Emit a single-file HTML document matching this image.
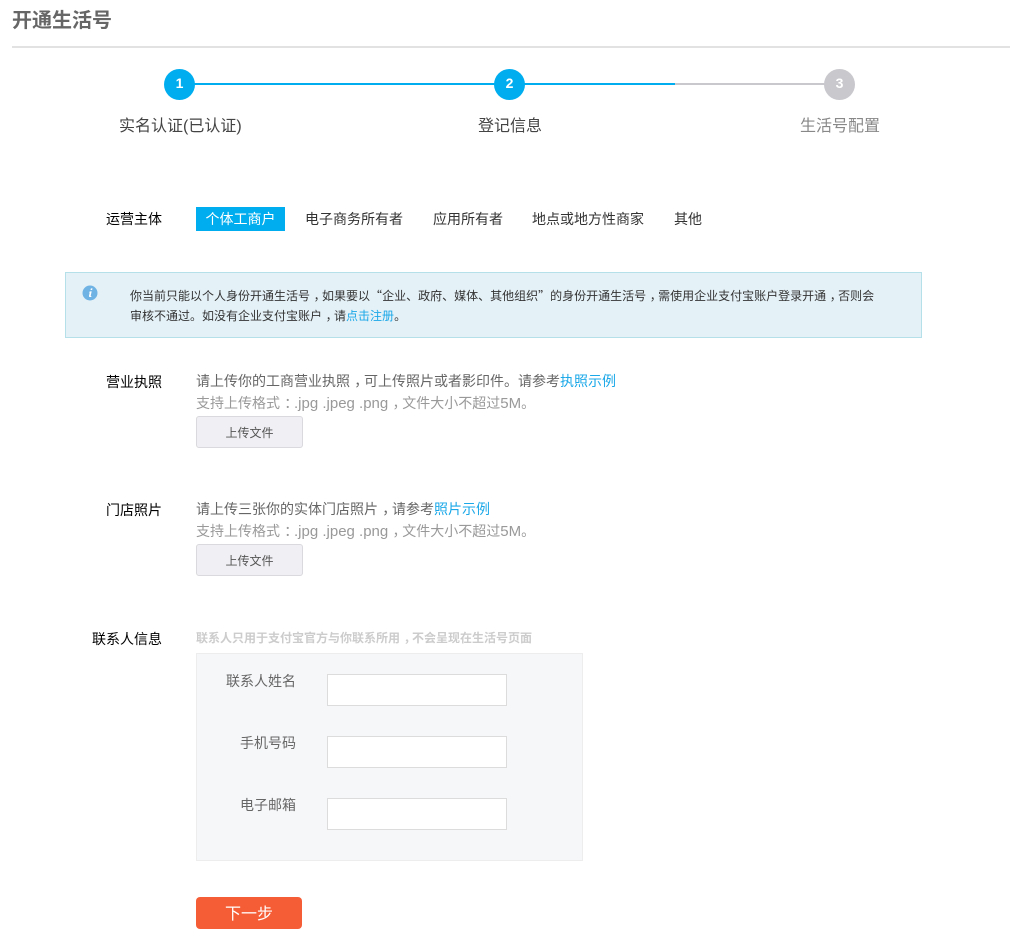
<!DOCTYPE html>
<html lang="zh-CN">
<head>
<meta charset="utf-8">
<title>开通生活号</title>
<style>
html,body{margin:0;padding:0;background:#fff;}
body{position:relative;width:1024px;height:941px;overflow:hidden;font-family:"Liberation Sans","Noto Sans CJK SC","WenQuanYi Zen Hei",sans-serif;font-size:14px;color:#333;}
.a{position:absolute;white-space:nowrap;}
.c{position:absolute;width:31px;height:31px;border-radius:50%;background:#00aeef;color:#fff;font-weight:bold;font-size:14px;line-height:29px;text-align:center;}
.l{position:absolute;height:2px;}
.lab{position:absolute;white-space:nowrap;color:#000;line-height:20px;text-align:right;left:60px;width:102px;}
.blue{color:#1ba8e8;}
.p{position:relative;left:.3em;}
.q{font-family:"Noto Sans CJK SC",sans-serif;}
.x{font-size:15px;}
.btn{position:absolute;left:196px;width:105px;height:30px;border:1px solid #d9d9de;border-radius:3px;background:#f0f0f4;color:#555;font-size:12px;line-height:32px;text-align:center;}
.inp{position:absolute;left:327px;width:178px;height:30px;border:1px solid #dcdcdc;background:#fff;}
.fl{position:absolute;left:200px;width:96px;text-align:right;color:#666;line-height:20px;white-space:nowrap;}
</style>
</head>
<body>
<div class="a" style="left:12px;top:8px;font-size:20px;font-weight:bold;color:#666;line-height:26px;">开通生活号</div>
<div class="a" style="left:12px;top:46px;width:998px;height:2px;background:#e2e2e2;"></div>

<div class="l" style="left:180px;top:83px;width:495px;background:#00aeef;"></div>
<div class="l" style="left:675px;top:83px;width:165px;background:#c8c8cd;"></div>
<div class="c" style="left:164px;top:69px;">1</div>
<div class="c" style="left:494px;top:69px;">2</div>
<div class="c" style="left:824px;top:69px;background:#c8c8cd;">3</div>
<div class="a" style="left:119px;top:116px;font-size:16px;line-height:22px;color:#444;">实名认证(已认证)</div>
<div class="a" style="left:478px;top:116px;font-size:16px;line-height:22px;color:#444;">登记信息</div>
<div class="a" style="left:800px;top:116px;font-size:16px;line-height:22px;color:#888;">生活号配置</div>

<div class="lab" style="top:209px;">运营主体</div>
<div class="a" style="left:196px;top:207px;width:89px;height:24px;background:#00aeef;color:#fff;line-height:24px;text-align:center;">个体工商户</div>
<div class="a" style="left:305px;top:209px;line-height:20px;">电子商务所有者</div>
<div class="a" style="left:433px;top:209px;line-height:20px;">应用所有者</div>
<div class="a" style="left:532px;top:209px;line-height:20px;">地点或地方性商家</div>
<div class="a" style="left:674px;top:209px;line-height:20px;">其他</div>

<div class="a" style="left:65px;top:272px;width:855px;height:64px;background:#e4f1f7;border:1px solid #b5e0ea;"></div>
<svg class="a" style="left:82px;top:285px;" width="16" height="16" viewBox="0 0 16 16"><circle cx="8" cy="8" r="7.5" fill="#6fb3e4"/><path d="M8.9 3.4h1.6l-.4 1.6H8.5zM8 6.4h1.7l-1 4.2c-.1.4.2.5.8.3l-.2.8c-1.4.6-2.6.2-2.3-1l.7-3.2-.8-.2z" fill="#fff"/></svg>
<div class="a" style="left:130px;top:286px;font-size:12px;line-height:20px;color:#333;">你当前只能以个人身份开通生活号<span class="p">，</span>如果要以<span class="q">“</span>企业、政府、媒体、其他组织<span class="q">”</span>的身份开通生活号<span class="p">，</span>需使用企业支付宝账户登录开通<span class="p">，</span>否则会</div>
<div class="a" style="left:130px;top:306px;font-size:12px;line-height:20px;color:#333;">审核不通过。如没有企业支付宝账户<span class="p">，</span>请<span class="blue">点击注册</span>。</div>

<div class="lab" style="top:372px;">营业执照</div>
<div class="a" style="left:196px;top:371px;line-height:20px;color:#666;">请上传你的工商营业执照<span class="p">，</span>可上传照片或者影印件。请参考<span class="blue">执照示例</span></div>
<div class="a" style="left:196px;top:393px;line-height:20px;color:#999;">支持上传格式<span class="p">：</span><span class="x">.jpg .jpeg .png</span><span class="p">，</span>文件大小不超过<span class="x">5M</span>。</div>
<div class="btn" style="top:416px;">上传文件</div>

<div class="lab" style="top:500px;">门店照片</div>
<div class="a" style="left:196px;top:499px;line-height:20px;color:#666;">请上传三张你的实体门店照片<span class="p">，</span>请参考<span class="blue">照片示例</span></div>
<div class="a" style="left:196px;top:521px;line-height:20px;color:#999;">支持上传格式<span class="p">：</span><span class="x">.jpg .jpeg .png</span><span class="p">，</span>文件大小不超过<span class="x">5M</span>。</div>
<div class="btn" style="top:544px;">上传文件</div>

<div class="lab" style="top:629px;">联系人信息</div>
<div class="a" style="left:196px;top:628px;font-size:12px;line-height:20px;color:#ccc;font-weight:bold;">联系人只用于支付宝官方与你联系所用<span class="p">，</span>不会呈现在生活号页面</div>
<div class="a" style="left:196px;top:653px;width:385px;height:206px;background:#f6f7f9;border:1px solid #ededed;"></div>
<div class="fl" style="top:671px;">联系人姓名</div>
<div class="inp" style="top:674px;"></div>
<div class="fl" style="top:733px;">手机号码</div>
<div class="inp" style="top:736px;"></div>
<div class="fl" style="top:795px;">电子邮箱</div>
<div class="inp" style="top:798px;"></div>

<div class="a" style="left:196px;top:897px;width:106px;height:32px;background:#f55d36;border-radius:4px;color:#fff;font-size:16px;line-height:35px;text-align:center;">下一步</div>
</body>
</html>
